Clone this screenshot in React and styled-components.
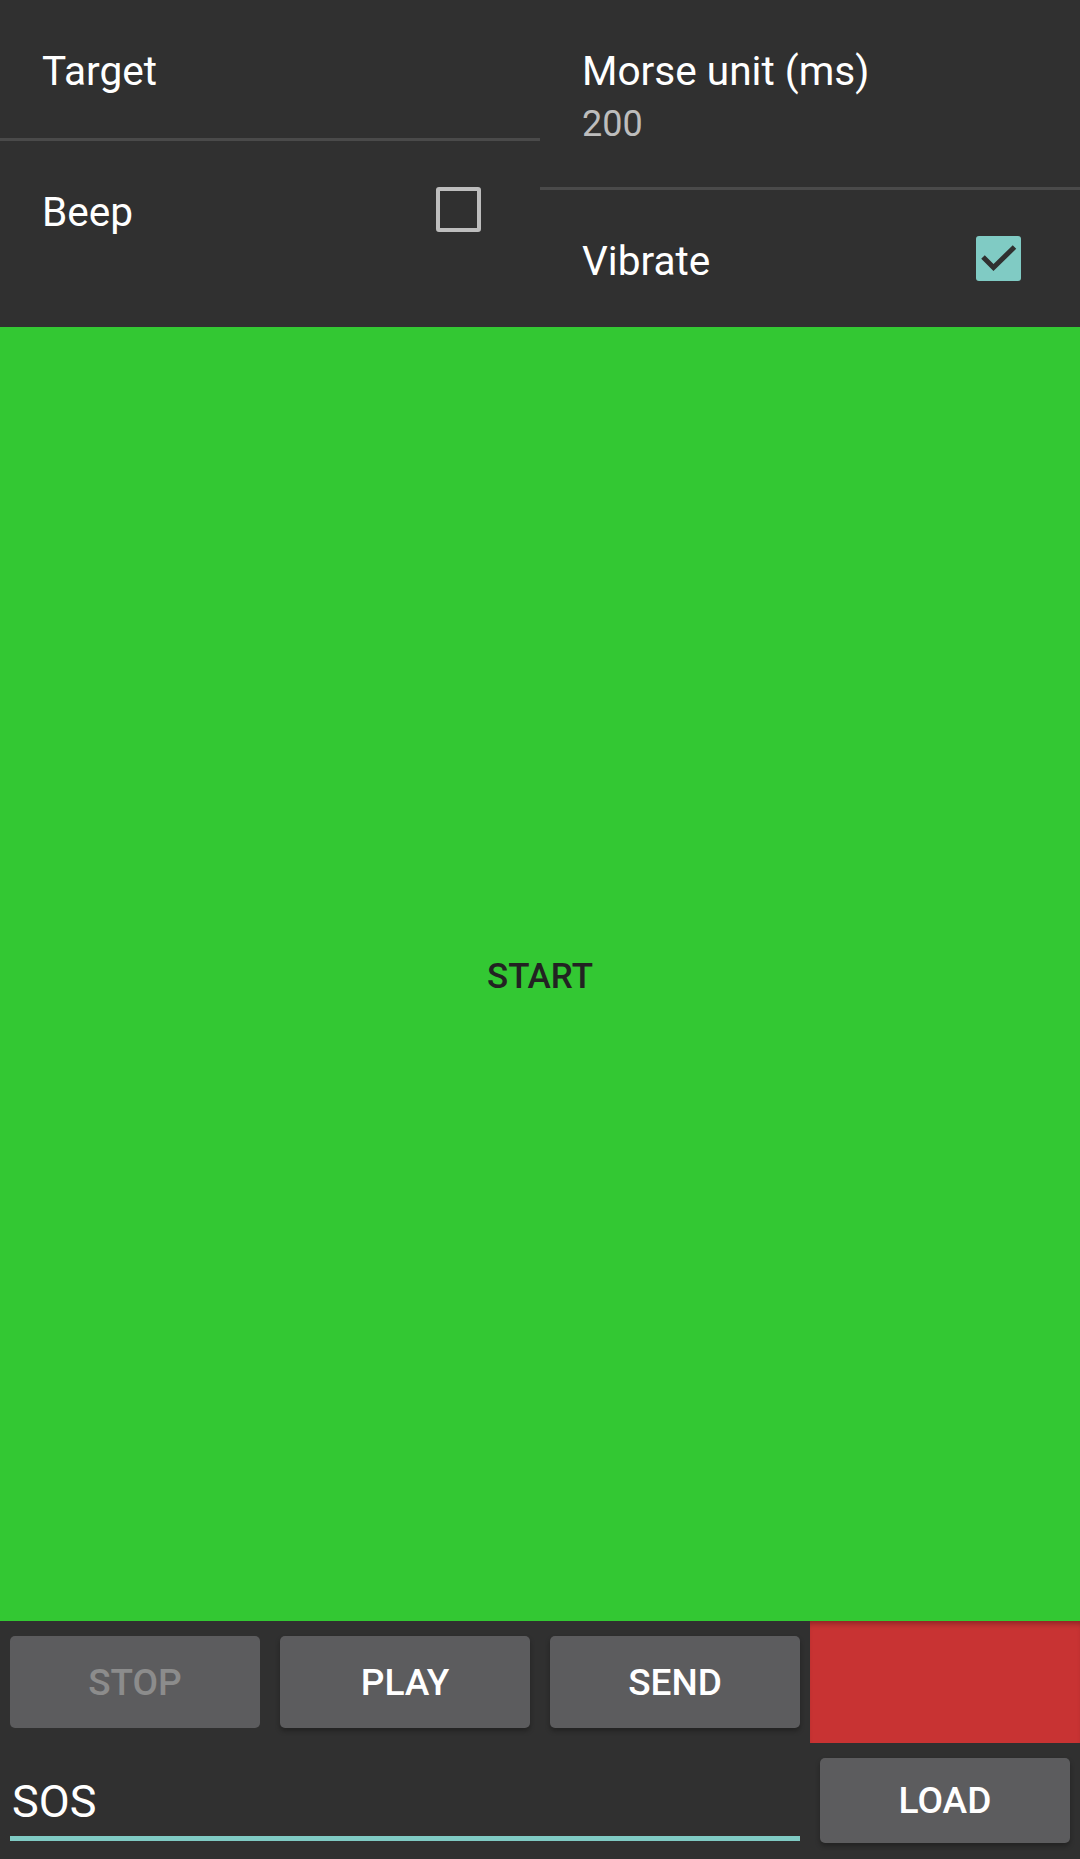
import React from "react";
import styled, { createGlobalStyle } from "styled-components";

const COLORS = {
  bg: "#303030",
  divider: "#4a4a4a",
  white: "#ffffff",
  hint: "#bdbdbd",
  accent: "#80cbc4",
  green: "#33c833",
  red: "#c83333",
  button: "#5c5c5e",
  disabled: "#8c8c8c",
};

const MEDIUM = `"Roboto Medium", Roboto, sans-serif`;

const GlobalStyle = createGlobalStyle`
  html, body {
    margin: 0;
    padding: 0;
    background: ${COLORS.bg};
    font-family: Roboto, "Noto Sans", sans-serif;
  }
`;

const Page = styled.div`
  display: flex;
  flex-direction: column;
  width: 1080px;
  height: 1859px;
  background: ${COLORS.bg};
  overflow: hidden;
`;

const Settings = styled.div`
  display: grid;
  grid-template-columns: 540px 540px;
  height: 327px;
`;

const Column = styled.div`
  display: flex;
  flex-direction: column;
`;

const Field = styled.div`
  height: ${({ h }) => h}px;
  padding: 47px 0 0 42px;
  box-sizing: border-box;
`;

const Label = styled.div`
  font-size: 40.6px;
  line-height: 48px;
  color: ${COLORS.white};
`;

const Value = styled.div`
  margin-top: 8px;
  font-size: 36px;
  line-height: 42px;
  color: ${COLORS.hint};
`;

const Divider = styled.div`
  height: 3px;
  background: ${COLORS.divider};
`;

const CheckRow = styled.div`
  flex: 1;
  display: flex;
  justify-content: space-between;
  align-items: flex-start;
  padding: 46px 59px 0 42px;
`;

const CheckLabel = styled(Label)`
  margin-top: 1px;
`;

const Box = styled.div`
  width: 45px;
  height: 45px;
  box-sizing: border-box;
  border-radius: 3px;
  border: ${({ checked }) => (checked ? "none" : `4px solid ${COLORS.hint}`)};
  background: ${({ checked }) => (checked ? COLORS.accent : "transparent")};
  display: flex;
  align-items: center;
  justify-content: center;
`;

const StartPad = styled.div`
  flex: 1;
  background: ${COLORS.green};
  display: flex;
  align-items: center;
  justify-content: center;
  font-family: ${MEDIUM};
  font-size: 35px;
  font-weight: 500;
  color: #222222;
  padding-top: 4px;
`;

const Controls = styled.div`
  display: grid;
  grid-template-columns: repeat(4, 270px);
  grid-template-rows: 122px 116px;
`;

const Cell = styled.div`
  display: flex;
  padding: ${({ pad }) => pad || "15px 10px"};
`;

const Button = styled.button`
  flex: 1;
  border: none;
  border-radius: 5px;
  background: ${COLORS.button};
  color: ${({ disabled }) => (disabled ? COLORS.disabled : COLORS.white)};
  box-shadow: ${({ disabled }) => (disabled ? "none" : "0 3px 5px rgba(0, 0, 0, 0.3)")};
  font-family: ${MEDIUM};
  font-size: 37px;
  font-weight: 500;
  padding: 0;
`;

const Indicator = styled.div`
  background: ${COLORS.red};
  box-shadow: inset 0 6px 6px -4px rgba(0, 0, 0, 0.35);
`;

const InputCell = styled.div`
  grid-column: span 3;
  padding: 33px 10px 0;
`;

const Input = styled.div`
  font-size: 45px;
  line-height: 52px;
  color: ${COLORS.white};
  padding: 0 0 8px 2px;
  border-bottom: 5px solid ${COLORS.accent};
`;

function Checkbox({ checked }) {
  return (
    <Box checked={checked}>
      {checked && (
        <svg width="45" height="45" viewBox="0 0 45 45">
          <path d="M7 21 L17.5 31.5 L38.5 11" fill="none" stroke={COLORS.bg} strokeWidth="5" />
        </svg>
      )}
    </Box>
  );
}

export default function App() {
  return (
    <Page>
      <GlobalStyle />
      <Settings>
        <Column>
          <Field h={138}>
            <Label>Target</Label>
          </Field>
          <Divider />
          <CheckRow>
            <CheckLabel>Beep</CheckLabel>
            <Checkbox checked={false} />
          </CheckRow>
        </Column>
        <Column>
          <Field h={187}>
            <Label>Morse unit (ms)</Label>
            <Value>200</Value>
          </Field>
          <Divider />
          <CheckRow>
            <CheckLabel>Vibrate</CheckLabel>
            <Checkbox checked />
          </CheckRow>
        </Column>
      </Settings>

      <StartPad>START</StartPad>

      <Controls>
        <Cell>
          <Button disabled>STOP</Button>
        </Cell>
        <Cell>
          <Button>PLAY</Button>
        </Cell>
        <Cell>
          <Button>SEND</Button>
        </Cell>
        <Indicator />
        <InputCell>
          <Input>SOS</Input>
        </InputCell>
        <Cell pad="15px 10px 16px">
          <Button>LOAD</Button>
        </Cell>
      </Controls>
    </Page>
  );
}
